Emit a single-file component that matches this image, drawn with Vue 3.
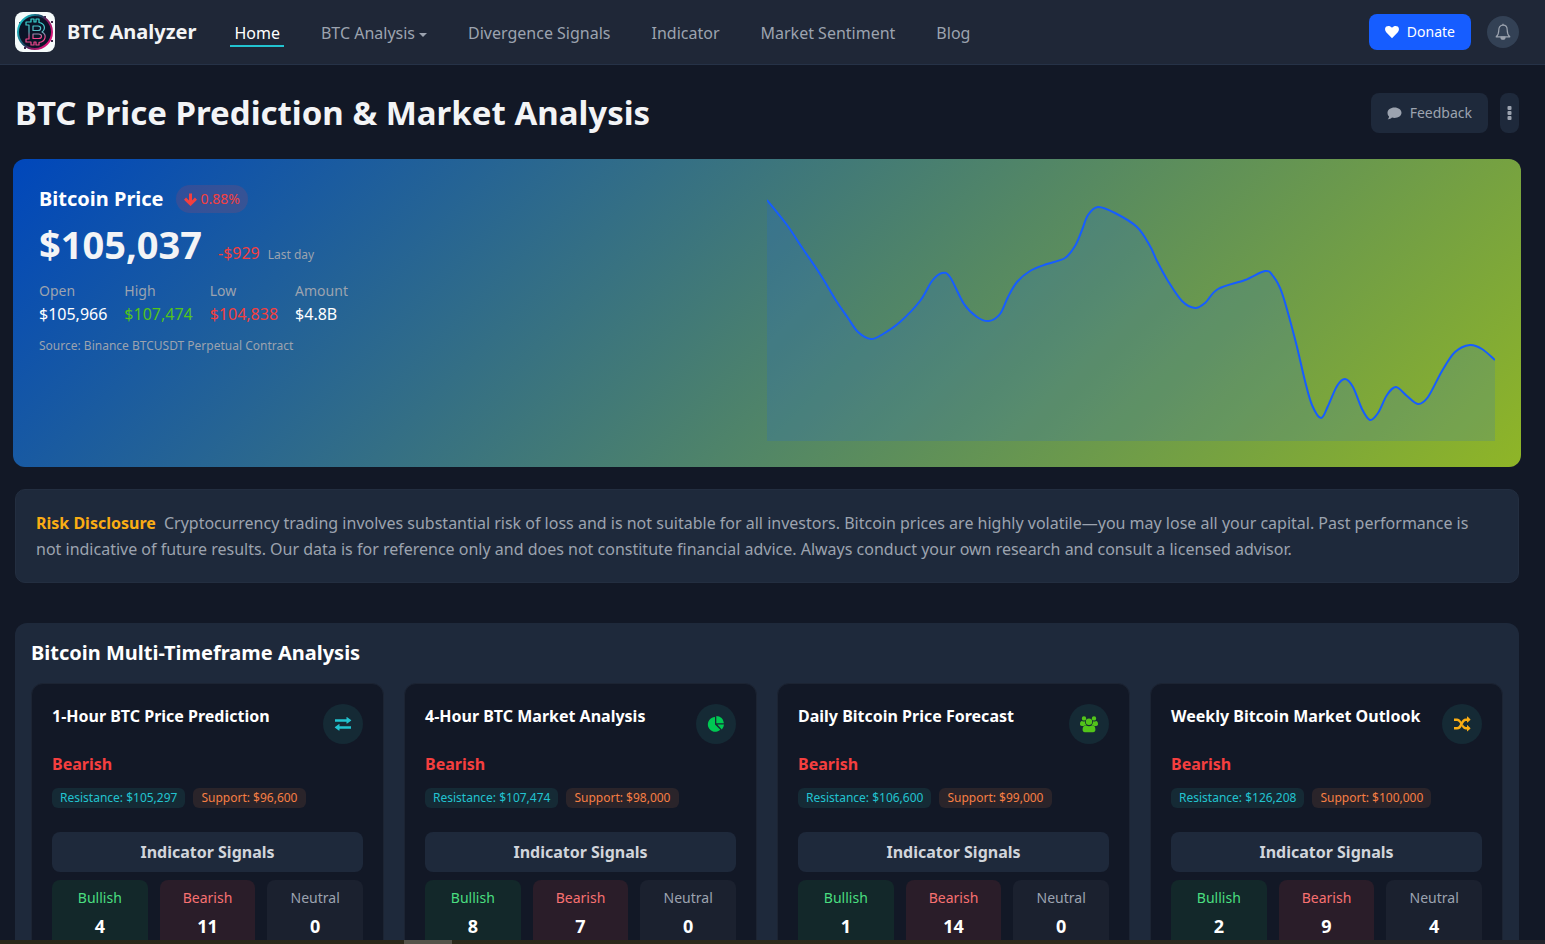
<template>
  <div class="page">
    <header class="navbar">
      <a href="#" class="brand">
        <svg class="logo" viewBox="0 0 40 40" aria-hidden="true">
          <defs>
            <linearGradient id="ring" x1="0" y1="0.2" x2="1" y2="0.8">
              <stop offset="0" stop-color="#19c9cf" />
              <stop offset="0.45" stop-color="#1b3b5c" />
              <stop offset="0.6" stop-color="#7a1a5c" />
              <stop offset="1" stop-color="#f0127f" />
            </linearGradient>
            <linearGradient id="coin" x1="0" y1="0" x2="0" y2="1">
              <stop offset="0.1" stop-color="#37d6d3" />
              <stop offset="0.5" stop-color="#5fb4c0" />
              <stop offset="0.7" stop-color="#f0468c" />
              <stop offset="1" stop-color="#f0468c" />
            </linearGradient>
          </defs>
          <rect width="40" height="40" rx="8" fill="#f5fbfb" />
          <path d="M29 4h2v2h-2zM36 9h2v2h-2zM4 10h2v2H4zM9 35h2v2H9zM36 28h2v2h-2z" fill="#3b2948" />
          <circle cx="20" cy="20" r="17" fill="#0a1428" stroke="url(#ring)" stroke-width="2" />
          <path
            d="M11 10h5V7h3v3h2V7h3v3.500c6 1 7 6.500 3 9.500 5 2.500 4 9.500-3 10.500V33h-3v-3h-2v3h-3v-3h-5v-3h3V13h-3zM18 14v4.500h5c3.500 0 3.500-4.500 0-4.500zM18 22v4.500h5.500c4 0 4-4.500 0-4.500z"
            fill="none" stroke="url(#coin)" stroke-width="1.200" stroke-linejoin="round"
          />
        </svg>
        <span>BTC Analyzer</span>
      </a>
      <nav class="menu">
        <a v-for="item in menu" :key="item.label" href="#" :class="['menu-link', { active: item.active }]">
          {{ item.label }}<i v-if="item.dropdown" class="caret"></i>
        </a>
      </nav>
      <div class="nav-actions">
        <button type="button" class="btn-donate">
          <svg width="14" height="14" viewBox="0 0 14 14" fill="currentColor" aria-hidden="true">
            <path d="M7 13.200 1.200 7.200C-.4 5.500-.3 2.900 1.300 1.600 3 .3 5.300.8 7 2.700 8.700.8 11 .3 12.700 1.600c1.600 1.300 1.700 3.900.1 5.600z" />
          </svg>
          Donate
        </button>
        <button type="button" class="btn-bell" aria-label="Notifications">
          <svg width="16" height="18" viewBox="0 0 16 18" fill="none" stroke="currentColor" stroke-width="1.200" stroke-linejoin="round" aria-hidden="true">
            <path d="M8 2.200C5 2.200 3.800 4.600 3.800 7c0 4-1 5.500-2.600 6.800h13.600C13.200 12.500 12.200 11 12.200 7c0-2.400-1.200-4.800-4.200-4.800z" />
            <path d="M8 .8v1.400" />
            <path d="M6 14.200a2 2 0 0 0 4 0z" fill="currentColor" />
          </svg>
        </button>
      </div>
    </header>

    <main class="content">
      <div class="title-row">
        <h1>BTC Price Prediction &amp; Market Analysis</h1>
        <div class="title-actions">
          <button type="button" class="btn-dark">
            <svg width="15" height="13" viewBox="0 0 15 13" fill="currentColor" aria-hidden="true">
              <path d="M7.500.5c4 0 7 2.300 7 5.200s-3 5.200-7 5.200c-.9 0-1.700-.1-2.500-.3-1 .9-2.400 1.700-4.300 1.800.8-.9 1.300-1.800 1.400-2.800C1 8.600.5 7.200.5 5.700.5 2.800 3.500.5 7.500.5z" />
            </svg>
            Feedback
          </button>
          <button type="button" class="btn-dark btn-more" aria-label="More">
            <svg width="5" height="14" viewBox="0 0 5 14" fill="currentColor" aria-hidden="true">
              <rect x="0.500" width="4" height="4" rx="1" />
              <rect x="0.500" y="5" width="4" height="4" rx="1" />
              <rect x="0.500" y="10" width="4" height="4" rx="1" />
            </svg>
          </button>
        </div>
      </div>

      <section class="hero">
        <div class="hero-info">
          <div class="hero-head">
            <h2>Bitcoin Price</h2>
            <span class="change">
              <svg width="13" height="13" viewBox="0 0 13 13" fill="none" stroke="currentColor" stroke-width="3" aria-hidden="true">
                <path d="M6.500 0.500v10.500M1 5.700l5.500 5.300L12 5.700" />
              </svg>
              0.88%
            </span>
          </div>
          <div class="price-row">
            <span class="price">$105,037</span>
            <span class="diff">-$929</span>
            <span class="small">Last day</span>
          </div>
          <dl class="stats">
            <div v-for="s in stats" :key="s.label">
              <dt>{{ s.label }}</dt>
              <dd :class="s.color">{{ s.value }}</dd>
            </div>
          </dl>
          <p class="small">Source: Binance BTCUSDT Perpetual Contract</p>
        </div>
        <svg class="chart" viewBox="0 0 728 242" preserveAspectRatio="none" role="img" aria-label="Bitcoin Price">
          <path :d="areaPath" fill="#165dff" fill-opacity="0.15" />
          <path :d="linePath" fill="none" stroke="#165dff" stroke-width="2" />
        </svg>
      </section>

      <section class="risk">
        <p><strong>Risk Disclosure</strong> Cryptocurrency trading involves substantial risk of loss and is not suitable for all investors. Bitcoin prices are highly volatile—you may lose all your capital. Past performance is not indicative of future results. Our data is for reference only and does not constitute financial advice. Always conduct your own research and consult a licensed advisor.</p>
      </section>

      <section class="panel">
        <h2>Bitcoin Multi-Timeframe Analysis</h2>
        <div class="cards">
          <article v-for="card in cards" :key="card.title" class="card">
            <div class="card-head">
              <h3>{{ card.title }}</h3>
              <span :class="['card-icon', card.icon]">
                <svg width="18" height="18" viewBox="0 0 18 18" fill="currentColor" aria-hidden="true">
                  <path v-for="(d, i) in icons[card.icon]" :key="i" :d="d" />
                </svg>
              </span>
            </div>
            <div class="trend">Bearish</div>
            <div class="tags">
              <span class="tag resistance">Resistance: {{ card.resistance }}</span>
              <span class="tag support">Support: {{ card.support }}</span>
            </div>
            <div class="signals-title">Indicator Signals</div>
            <div class="signals">
              <div class="signal bullish"><span>Bullish</span><b>{{ card.bullish }}</b></div>
              <div class="signal bearish"><span>Bearish</span><b>{{ card.bearish }}</b></div>
              <div class="signal neutral"><span>Neutral</span><b>{{ card.neutral }}</b></div>
            </div>
          </article>
        </div>
      </section>
    </main>
    <div class="bottom-strip"><i></i></div>
  </div>
</template>

<script setup>
import { computed } from 'vue';

const menu = [
  { label: 'Home', active: true },
  { label: 'BTC Analysis', dropdown: true },
  { label: 'Divergence Signals' },
  { label: 'Indicator' },
  { label: 'Market Sentiment' },
  { label: 'Blog' },
];

const stats = [
  { label: 'Open', value: '$105,966', color: '' },
  { label: 'High', value: '$107,474', color: 'up' },
  { label: 'Low', value: '$104,838', color: 'down' },
  { label: 'Amount', value: '$4.8B', color: '' },
];

const cards = [
  { title: '1-Hour BTC Price Prediction', icon: 'exchange', resistance: '$105,297', support: '$96,600', bullish: 4, bearish: 11, neutral: 0 },
  { title: '4-Hour BTC Market Analysis', icon: 'pie', resistance: '$107,474', support: '$98,000', bullish: 8, bearish: 7, neutral: 0 },
  { title: 'Daily Bitcoin Price Forecast', icon: 'group', resistance: '$106,600', support: '$99,000', bullish: 1, bearish: 14, neutral: 0 },
  { title: 'Weekly Bitcoin Market Outlook', icon: 'shuffle', resistance: '$126,208', support: '$100,000', bullish: 2, bearish: 9, neutral: 4 },
];

const icons = {
  exchange: [
    'M1 4.300h11.500V2.500c0-.4.4-.5.7-.3l3.800 2.900c.3.200.3.500 0 .7l-3.800 2.800c-.3.300-.7.100-.7-.3V6.800H1z',
    'M17 11.300H5.500V9.500c0-.4-.4-.5-.7-.3L1 12.100c-.3.200-.3.500 0 .7l3.800 2.800c.3.300.7.100.7-.3v-1.500H17z',
  ],
  pie: [
    'M8 2v7.500l5.300 5.300A7.400 7.400 0 1 1 8 2z',
    'M9.300 1a7.600 7.600 0 0 1 7.600 7.300H9.300z',
    'M10.300 9.600h6.700a7.500 7.500 0 0 1-2.200 4.900z',
  ],
  group: [
    'M4 1.200a2.200 2.200 0 1 1 0 4.400 2.200 2.200 0 0 1 0-4.400z',
    'M14 1.200a2.200 2.200 0 1 1 0 4.400 2.200 2.200 0 0 1 0-4.400z',
    'M9 3.600a3.200 3.200 0 1 1 0 6.400 3.200 3.200 0 0 1 0-6.400z',
    'M2 6c1.200.6 2 .6 3 .3-.1 1.400.3 2.600 1.200 3.600-1 0-1.800.3-2.400 1H2C.2 10.900 0 10 0 9c0-1.600.6-3 2-3z',
    'M16 6c-1.200.6-2 .6-3 .3.100 1.400-.3 2.600-1.200 3.600 1 0 1.800.3 2.400 1H16c1.800 0 2-.9 2-1.900 0-1.600-.6-3-2-3z',
    'M5.800 10.300c2 1.300 4.400 1.300 6.400 0 2.500 0 3.200 2.200 3.200 4.500 0 1.500-.8 2.400-2.300 2.400H4.900c-1.500 0-2.300-.9-2.300-2.400 0-2.300.7-4.500 3.200-4.500z',
  ],
  shuffle: [
    'M1 3.500h3c1.700 0 3 1 4.300 3.200L7.200 8.900C6 6.700 5.200 5.900 4 5.900H1zM1 12.100h3c1.500 0 2.300-1.300 3.600-4C9 5.200 10.300 3.500 13 3.500h1V1.800c0-.3.300-.4.500-.2l2.800 2.600c.2.200.2.500 0 .7l-2.800 2.600c-.2.200-.5.100-.5-.2V5.900h-1c-1.500 0-2.300 1.300-3.600 4C8 12.800 6.700 14.500 4 14.500H1z',
    'M9.800 9.100c1.200 2.200 2 3 3.200 3h1v-1.700c0-.3.300-.4.500-.2l2.800 2.800c.2.200.2.500 0 .7l-2.800 2.600c-.2.200-.5.100-.5-.2v-1.600h-1c-1.700 0-3-1-4.300-3.200z',
  ],
};

const points = [
  [0, 1], [20, 26], [36, 50], [53, 75], [70, 103], [81, 119], [91, 133], [104, 140], [116, 135], [133, 123],
  [153, 102], [165, 82], [175, 74], [183, 78], [197, 105], [210, 118], [222, 122], [233, 115], [241, 98],
  [250, 83], [263, 72], [280, 65], [298, 59], [308, 47], [315, 31], [321, 16], [331, 8], [348, 14],
  [370, 28], [383, 47], [390, 62], [401, 82], [415, 102], [428, 109], [438, 104], [451, 90], [478, 81],
  [498, 72], [506, 77], [515, 94], [528, 140], [538, 182], [545, 206], [554, 219], [561, 207], [570, 187],
  [578, 180], [586, 188], [595, 210], [603, 221], [611, 214], [620, 196], [629, 188], [640, 197],
  [651, 205], [661, 198], [675, 172], [688, 153], [703, 146], [715, 150], [728, 161],
];

// smooth curve through every point
const linePath = computed(() => {
  let d = `M${points[0].join(' ')}`;
  for (let i = 0; i < points.length - 1; i++) {
    const p0 = points[i - 1] || points[i];
    const p1 = points[i];
    const p2 = points[i + 1];
    const p3 = points[i + 2] || p2;
    d += ` C${p1[0] + (p2[0] - p0[0]) / 6} ${p1[1] + (p2[1] - p0[1]) / 6}`;
    d += ` ${p2[0] - (p3[0] - p1[0]) / 6} ${p2[1] - (p3[1] - p1[1]) / 6} ${p2[0]} ${p2[1]}`;
  }
  return d;
});

const areaPath = computed(() => `${linePath.value} L728 242 L0 242 Z`);
</script>

<style>
body {
  margin: 0;
  background: #111827;
}
</style>

<style scoped>
* {
  box-sizing: border-box;
}

.page {
  height: 100vh;
  overflow-y: auto;
  scrollbar-width: none;
  background: #121826;
  color: #fff;
  font-family: "Segoe UI", "Noto Sans", "Open Sans", sans-serif;
  font-size: 16px;
  line-height: 24px;
}

h1, h2, h3, p, dl, dd {
  margin: 0;
}

a {
  color: inherit;
  text-decoration: none;
}

button {
  font: inherit;
  border: none;
  cursor: pointer;
  display: flex;
  align-items: center;
  justify-content: center;
}

.navbar {
  display: flex;
  align-items: center;
  height: 65px;
  padding: 0 26px 0 15px;
  background: #1f2737;
  border-bottom: 1px solid #263247;
}

.brand {
  display: flex;
  align-items: center;
  gap: 12px;
  font-size: 20px;
  font-weight: 700;
  color: #f3f4f6;
}

.logo {
  width: 40px;
  height: 40px;
}

.menu {
  display: flex;
  gap: 33px;
  margin-left: 34px;
  color: #9ca3af;
}

.menu-link {
  padding: 3px 4px 0;
  border-bottom: 2px solid transparent;
}

.menu-link.active {
  color: #fff;
  border-color: #22c3d0;
}

.caret {
  display: inline-block;
  margin-left: 4px;
  vertical-align: 2px;
  border: 4px solid transparent;
  border-top-color: currentColor;
  border-bottom: 0;
}

.nav-actions {
  display: flex;
  align-items: center;
  gap: 16px;
  margin-left: auto;
}

.btn-donate {
  gap: 8px;
  height: 36px;
  padding: 0 16px;
  border-radius: 8px;
  background: #165dff;
  color: #fff;
  font-size: 14px;
}

.btn-bell {
  width: 32px;
  height: 32px;
  padding: 0;
  border-radius: 50%;
  background: #334155;
  color: #9ca3af;
}

.content {
  padding: 28px 26px 40px 15px;
}

.title-row {
  display: flex;
  align-items: center;
  justify-content: space-between;
  height: 40px;
}

h1 {
  font-size: 33px;
  line-height: 40px;
  font-weight: 700;
  color: #f3f4f6;
}

.title-actions {
  display: flex;
  gap: 12px;
}

.btn-dark {
  gap: 8px;
  height: 40px;
  padding: 0 16px;
  border-radius: 8px;
  background: #1e293b;
  color: #9ca3af;
  font-size: 14px;
}

.btn-more {
  padding: 0 7px;
}

.hero {
  display: grid;
  grid-template-columns: 1fr 1fr;
  margin: 26px -2px 0;
  padding: 26px;
  min-height: 308px;
  border-radius: 12px;
  background: linear-gradient(135deg, #0047bb, #8fb527);
}

.hero-head {
  display: flex;
  align-items: center;
  gap: 12px;
  height: 28px;
}

.hero-head h2,
.panel h2 {
  font-size: 20px;
  font-weight: 700;
}

.change {
  display: flex;
  align-items: center;
  gap: 4px;
  height: 28px;
  padding: 0 8px;
  border-radius: 14px;
  background: rgba(245, 63, 63, 0.15);
  color: #f53f3f;
  font-size: 14px;
}

.price-row {
  display: flex;
  align-items: baseline;
  gap: 8px;
  margin-top: 7px;
}

.price {
  margin-right: 8px;
  font-size: 38px;
  line-height: 48px;
  font-weight: 700;
  color: #f3f4f6;
}

.diff,
.down {
  color: #f53f3f;
}

.up {
  color: #52c41a;
}

.small {
  color: #9ca3af;
  font-size: 12px;
}

.stats {
  display: flex;
  gap: 17px;
  margin: 12px 0 8px;
}

.stats dt {
  color: #9ca3af;
  font-size: 14px;
  line-height: 22px;
}

.chart {
  width: 100%;
  height: 242px;
  margin-top: 14px;
}

.risk {
  margin-top: 22px;
  padding: 20px 24px 20px 20px;
  border: 1px solid #232e40;
  border-radius: 10px;
  background: #1e293b;
  color: #9ca3af;
  line-height: 26px;
}

.risk strong {
  margin-right: 4px;
  color: #faad14;
  font-weight: 700;
}

.panel {
  margin-top: 40px;
  padding: 16px;
  border-radius: 12px;
  background: #1e293b;
}

.panel h2 {
  line-height: 28px;
}

.cards {
  display: grid;
  grid-template-columns: repeat(4, 1fr);
  gap: 20px;
  margin-top: 16px;
}

.card {
  padding: 20px;
  border: 1px solid #1c2433;
  border-radius: 12px;
  background: #121826;
}

.card-head {
  display: flex;
  justify-content: space-between;
}

h3 {
  font-size: 16px;
  font-weight: 700;
}

.card-icon {
  display: flex;
  flex: none;
  align-items: center;
  justify-content: center;
  width: 40px;
  height: 40px;
  border-radius: 50%;
  background: #152a35;
}

.exchange {
  color: #22c3d0;
}

.pie {
  color: #00c853;
}

.group {
  color: #52c41a;
}

.shuffle {
  color: #faad14;
}

.trend {
  margin-top: 8px;
  color: #f53f3f;
  font-weight: 700;
}

.tags {
  display: flex;
  gap: 8px;
  margin-top: 12px;
}

.tag {
  padding: 0 8px;
  border-radius: 6px;
  font-size: 12px;
  line-height: 20px;
}

.resistance {
  background: #152a35;
  color: #22c3d0;
}

.support {
  background: #2a242a;
  color: #f77f44;
}

.signals-title {
  margin-top: 24px;
  border-radius: 8px;
  background: #1e293b;
  color: #d1d5db;
  font-weight: 700;
  line-height: 40px;
  text-align: center;
}

.signals {
  display: grid;
  grid-template-columns: repeat(3, 1fr);
  gap: 12px;
  margin-top: 8px;
}

.signal {
  display: flex;
  flex-direction: column;
  align-items: center;
  padding: 8px;
  border-radius: 8px;
  font-size: 14px;
  line-height: 20px;
}

.signal b {
  margin-top: 4px;
  color: #fff;
  font-size: 18px;
  line-height: 28px;
}

.bullish {
  background: #13282a;
  color: #4ade80;
}

.bearish {
  background: #2a1d29;
  color: #f87171;
}

.neutral {
  background: #1b212f;
  color: #9ca3af;
}

.bottom-strip {
  position: fixed;
  right: 0;
  bottom: 0;
  left: 0;
  height: 4px;
  padding-left: 404px;
  background: linear-gradient(90deg, #292719, #2e2a1c 70%, #23242c);
}

.bottom-strip i {
  display: block;
  width: 48px;
  height: 4px;
  background: #55534a;
}
</style>
